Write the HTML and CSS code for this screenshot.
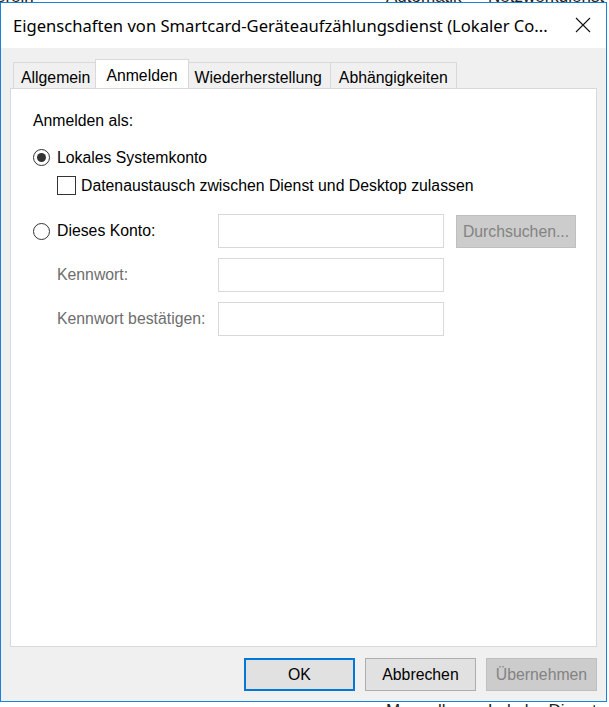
FILE: index.html
```html
<!DOCTYPE html>
<html lang="de">
    <head>
        <meta charset="UTF-8">
        <title>Eigenschaften von Smartcard-Geräteaufzählungsdienst</title>
        <link rel="stylesheet" href="styles.css">
    </head>
    <body>
        <div class="behind behind-top">
            <span class="bg-a">erein</span>
            <span class="bg-b">Automatik</span>
            <span class="bg-c">Netzwerkdienst</span>
        </div>

        <div class="dialog">
            <div class="titlebar">
                <span class="title">Eigenschaften von Smartcard-Geräteaufzählungsdienst (Lokaler Co...</span>
                <svg class="close" width="16" height="16" viewBox="0 0 16 16">
                    <path d="M1 1 L15 15 M15 1 L1 15" stroke="#111" stroke-width="1.1" fill="none"/>
                </svg>
            </div>

            <div class="client">
                <ul class="tabs">
                    <li class="tab tab-first">Allgemein</li>
                    <li class="tab active">Anmelden</li>
                    <li class="tab">Wiederherstellung</li>
                    <li class="tab">Abhängigkeiten</li>
                </ul>

                <div class="panel">
                    <p class="heading">Anmelden als:</p>

                    <div class="option">
                        <span class="radio checked"></span>
                        <span>Lokales Systemkonto</span>
                    </div>
                    <div class="option sub">
                        <span class="checkbox"></span>
                        <span>Datenaustausch zwischen Dienst und Desktop zulassen</span>
                    </div>

                    <div class="account">
                        <div class="option">
                            <span class="radio"></span>
                            <span>Dieses Konto:</span>
                        </div>
                        <div class="field"></div>
                        <div class="btn disabled browse">Durchsuchen...</div>

                        <div class="label">Kennwort:</div>
                        <div class="field"></div>
                        <div></div>

                        <div class="label">Kennwort bestätigen:</div>
                        <div class="field"></div>
                        <div></div>
                    </div>
                </div>

                <div class="buttons">
                    <div class="btn default">OK</div>
                    <div class="btn">Abbrechen</div>
                    <div class="btn disabled">Übernehmen</div>
                </div>
            </div>
        </div>

        <div class="behind behind-bottom">
            <span class="bg-a">rm</span>
            <span class="bg-b">Manuell</span>
            <span class="bg-c">Lokaler Dienst</span>
        </div>
    </body>
</html>
```

FILE: styles.css
```css
body {
    margin: 0;
    padding: 0;
    width: 609px;
    height: 707px;
    overflow: hidden;
    background: #ffffff;
    font-family: "Liberation Sans", Arial, sans-serif;
    font-size: 15.8px;
    color: #000;
}

/* list window peeking out above and below the dialog */
.behind {
    position: relative;
    overflow: hidden;
    font-size: 17px;
    line-height: 17px;
    color: #222;
}

.behind span {
    position: absolute;
}

.behind-top {
    height: 2px;
}

.behind-top span {
    bottom: -3px;
}

.behind-bottom {
    height: 5px;
}

.behind-bottom span {
    top: 0;
}

.bg-a { left: -4px; }
.bg-b { left: 386px; }
.bg-c { left: 488px; }

.dialog {
    width: 607px;
    height: 700px;
    box-sizing: border-box;
    border: 1px solid #1a82d8;
    display: flex;
    flex-direction: column;
    background: #f0f0f0;
}

.titlebar {
    height: 45px;
    flex-shrink: 0;
    background: #ffffff;
    display: flex;
    align-items: center;
    justify-content: space-between;
    padding: 0 15px 0 12px;
}

.title {
    font-family: "Noto Sans", "Open Sans", sans-serif;
    font-size: 16.6px;
    color: #000;
    white-space: nowrap;
}

.close {
    margin-top: -2px;
}

.client {
    flex: 1;
    display: flex;
    flex-direction: column;
    padding: 12px 9px 0 9px;
}

.tabs {
    list-style: none;
    margin: 0;
    padding: 0 0 0 3px;
    display: flex;
    align-items: flex-end;
    height: 28px;
    position: relative;
    z-index: 1;
}

.tab {
    height: 25px;
    box-sizing: content-box;
    line-height: 30px;
    padding: 0 8px;
    border: 1px solid #d9d9d9;
    border-bottom: none;
    border-left: none;
    background: #f0f0f0;
    white-space: nowrap;
    overflow: hidden;
}

.tab-first {
    border-left: 1px solid #d9d9d9;
    padding: 0 6px 0 7px;
}

.tab.active {
    height: 28px;
    line-height: 32px;
    background: #ffffff;
    margin-left: -2px;
    margin-right: -2px;
    padding: 0 10px;
    border-left: 1px solid #d9d9d9;
    position: relative;
    z-index: 2;
}

.panel {
    height: 559px;
    box-sizing: border-box;
    background: #ffffff;
    border: 1px solid #d9d9d9;
    padding: 23px 20px 0 22px;
}

.heading {
    margin: 0 0 18px 0;
    line-height: 18px;
}

.option {
    display: flex;
    align-items: center;
    gap: 7px;
    height: 19px;
}

.option.sub {
    margin: 9px 0 0 24px;
    gap: 5px;
}

.radio {
    width: 15px;
    height: 15px;
    border: 1px solid #333;
    border-radius: 50%;
    display: flex;
    align-items: center;
    justify-content: center;
    flex-shrink: 0;
}

.radio.checked::after {
    content: "";
    width: 9px;
    height: 9px;
    border-radius: 50%;
    background: #333;
}

.checkbox {
    width: 17px;
    height: 17px;
    border: 1px solid #333;
    flex-shrink: 0;
}

.account {
    display: grid;
    grid-template-columns: 173px 226px 120px;
    column-gap: 12px;
    row-gap: 10px;
    align-items: center;
    margin-top: 19px;
}

.field {
    height: 34px;
    box-sizing: border-box;
    border: 1px solid #d9d9d9;
    background: #fff;
}

.label {
    padding-left: 24px;
    color: #6d6d6d;
    white-space: nowrap;
}

.btn {
    height: 33px;
    box-sizing: border-box;
    border: 1px solid #adadad;
    background: #e1e1e1;
    display: flex;
    align-items: center;
    justify-content: center;
}

.btn.disabled {
    background: #cccccc;
    border-color: #bfbfbf;
    color: #838383;
}

.btn.default {
    border: 2px solid #0078d7;
}

.browse {
    margin-top: 1px;
}

.buttons {
    display: flex;
    justify-content: flex-end;
    gap: 10px;
    margin-top: 11px;
}

.buttons .btn {
    width: 111px;
}
```
